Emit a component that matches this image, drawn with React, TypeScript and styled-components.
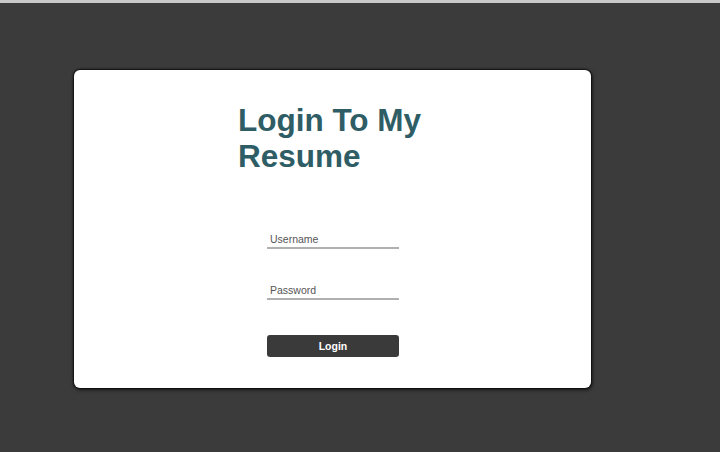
import React from "react";
import styled, { createGlobalStyle } from "styled-components";

const Global = createGlobalStyle`
  html, body { margin: 0; padding: 0; background: #3b3b3b; }
  body { font-family: "Liberation Sans", Arial, sans-serif; }
`;

const Page = styled.div`
  height: 452px;
  box-sizing: border-box;
  border-top: 3px solid #c9c9c9;
  background: #3b3b3b;
  padding: 67px 0 0 74px;
`;

const Card = styled.div`
  width: 517px;
  height: 318px;
  box-sizing: border-box;
  background: #ffffff;
  border-radius: 6px;
  box-shadow: 0 0 2px 1px rgba(0, 0, 0, 0.75), 1px 2px 4px rgba(0, 0, 0, 0.5);
  padding-top: 32px;
  display: flex;
  flex-direction: column;
  align-items: center;
`;

const Title = styled.h1`
  margin: 0;
  width: 190px;
  padding-left: 1px;
  font-size: 31.5px;
  line-height: 36px;
  font-weight: 700;
  color: #2f5d65;
`;

const Form = styled.form`
  width: 132px;
  margin-top: 56px;
  margin-left: 1px;
  display: flex;
  flex-direction: column;
`;

const Field = styled.input`
  display: block;
  width: 100%;
  height: 19px;
  box-sizing: border-box;
  border: none;
  border-bottom: 2px solid #b0b0b0;
  padding: 0 3px;
  margin-bottom: ${(p: { $gap: number }) => p.$gap}px;
  font-family: "Liberation Sans", Arial, sans-serif;
  font-size: 10.5px;
  color: #333;
  outline: none;
  background: transparent;
  &::placeholder { color: #555; }
`;

const Button = styled.button`
  width: 132px;
  height: 22px;
  border: none;
  border-radius: 3px;
  background: #3a3a3a;
  color: #ffffff;
  font-family: "Liberation Sans", Arial, sans-serif;
  font-weight: 700;
  font-size: 10.5px;
  padding: 0;
  cursor: pointer;
`;

export default function App() {
  return (
    <>
      <Global />
      <Page>
        <Card>
          <Title>Login To My Resume</Title>
          <Form onSubmit={(e) => e.preventDefault()}>
            <Field $gap={32} type="text" placeholder="Username" />
            <Field $gap={35} type="password" placeholder="Password" />
            <Button type="submit">Login</Button>
          </Form>
        </Card>
      </Page>
    </>
  );
}
